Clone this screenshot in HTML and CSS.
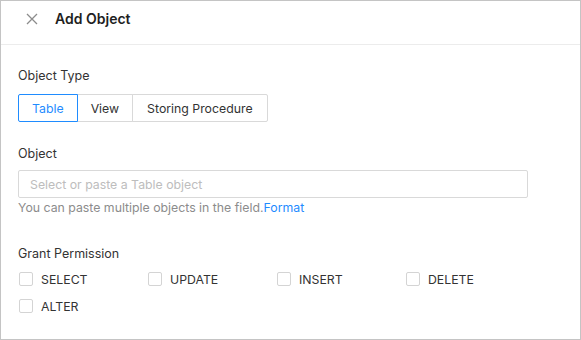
FILE: index.html
```html
<!DOCTYPE html>
<html lang="en">
<head>
    <meta charset="UTF-8">
    <meta name="viewport" content="width=device-width, initial-scale=1.0">
    <title>Add Object</title>
    <link rel="stylesheet" href="styles.css">
</head>
<body>

<div class="panel">
    <div class="panel-header">
        <span class="close-btn">
            <svg width="12" height="12" viewBox="0 0 12 12">
                <path d="M1 1 L11 11 M11 1 L1 11" stroke="#8c8c8c" stroke-width="1.3" fill="none"/>
            </svg>
        </span>
        <span class="panel-title">Add Object</span>
    </div>

    <div class="panel-body">
        <!-- Object type -->
        <div class="field-label">Object Type</div>
        <div class="segmented">
            <button class="seg-btn active">Table</button>
            <button class="seg-btn">View</button>
            <button class="seg-btn">Storing Procedure</button>
        </div>

        <!-- Object -->
        <div class="field-label spaced">Object</div>
        <input type="text" class="text-input" placeholder="Select or paste a Table object">
        <div class="help">You can paste multiple objects in the field.<a href="#">Format</a></div>

        <!-- Permissions -->
        <div class="field-label spaced-lg">Grant Permission</div>
        <div class="perm-grid">
            <label class="perm"><span class="box"></span>SELECT</label>
            <label class="perm"><span class="box"></span>UPDATE</label>
            <label class="perm"><span class="box"></span>INSERT</label>
            <label class="perm"><span class="box"></span>DELETE</label>
            <label class="perm"><span class="box"></span>ALTER</label>
        </div>
    </div>
</div>

</body>
</html>
```

FILE: styles.css
```css
body {
    margin: 0;
    font-family: Inter, "Noto Sans", sans-serif;
    color: #262626;
    background: #fff;
}
.panel {
    width: 581px;
    height: 340px;
    box-sizing: border-box;
    border: 1px solid #c4c4c4;
    background: #fff;
}
.panel-header {
    height: 44px;
    box-sizing: border-box;
    padding: 0 0 8px 25px;
    border-bottom: 1px solid #ececec;
    display: flex;
    align-items: center;
}
.close-btn {
    display: flex;
    width: 12px;
    height: 12px;
    margin-right: 17px;
}
.panel-title {
    font-size: 14px;
    font-weight: 600;
    color: #1f1f1f;
}
.panel-body {
    padding: 21px 17px 0;
}
.field-label {
    font-size: 12.5px;
    line-height: 20px;
    color: #333;
    margin-bottom: 8px;
}
.field-label.spaced {
    margin-top: 22px;
    margin-bottom: 6px;
}
.field-label.spaced-lg {
    margin-top: 26px;
    margin-bottom: 5px;
}
.segmented {
    display: flex;
}
.seg-btn {
    height: 28px;
    padding: 0 13px;
    border: 1px solid #d9d9d9;
    margin-left: -1px;
    background: #fff;
    font-family: inherit;
    font-size: 12.3px;
    color: #333;
}
.seg-btn:first-child {
    margin-left: 0;
    border-radius: 2px 0 0 2px;
}
.seg-btn:last-child {
    border-radius: 0 2px 2px 0;
    padding: 0 14px;
}
.seg-btn.active {
    border-color: #1f8cff;
    color: #1f8cff;
    position: relative;
    z-index: 1;
}
.text-input {
    display: block;
    width: 510px;
    height: 28px;
    box-sizing: border-box;
    border: 1px solid #d9d9d9;
    border-radius: 2px;
    padding: 0 11px;
    font-family: inherit;
    font-size: 12.3px;
    color: #333;
}
.text-input::placeholder {
    color: #bdbdbd;
}
.help {
    font-size: 12.3px;
    line-height: 20px;
    color: #8c8c8c;
}
.help a {
    color: #1f8cff;
    text-decoration: none;
}
.perm-grid {
    display: grid;
    grid-template-columns: repeat(4, 129px);
    row-gap: 7px;
}
.perm {
    display: flex;
    align-items: center;
    height: 20px;
    font-size: 12.3px;
    color: #333;
}
.box {
    width: 14px;
    height: 14px;
    box-sizing: border-box;
    border: 1px solid #d4d4d4;
    border-radius: 2px;
    margin-left: 1px;
    margin-right: 8px;
}
```
